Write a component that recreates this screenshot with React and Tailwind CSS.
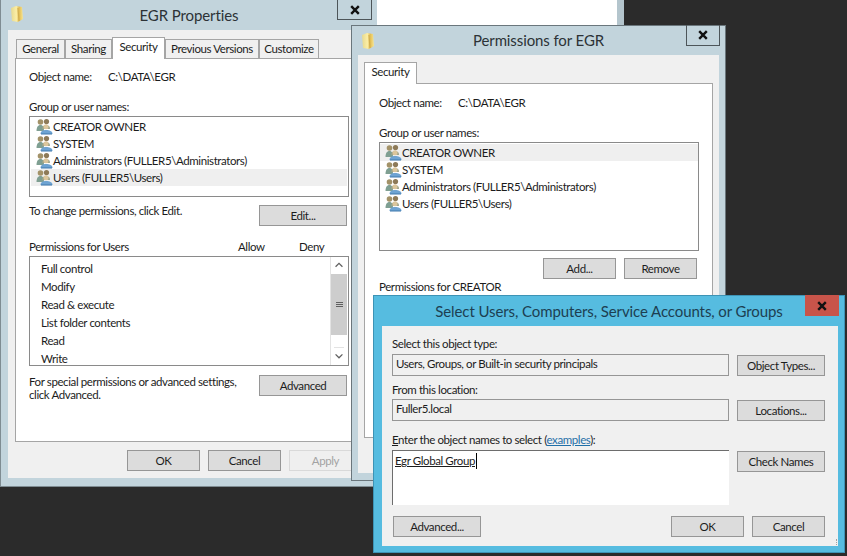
import React from 'react';

function FolderIcon() {
  return (
    <svg width="14" height="18" viewBox="0 0 14 18">
      <defs>
        <linearGradient id="fold" x1="0" y1="0" x2="1" y2="0">
          <stop offset="0" stopColor="#e6d98f" />
          <stop offset="0.45" stopColor="#fbeea6" />
          <stop offset="0.68" stopColor="#e3bd52" />
          <stop offset="1" stopColor="#f6e593" />
        </linearGradient>
      </defs>
      <path d="M1 3 L6 1 L12 2 L13 14 L8 17 L2 16 Z" fill="url(#fold)" />
      <path d="M8 3 L9 16" stroke="#d0ae50" strokeWidth="1.2" />
    </svg>
  );
}

function GroupIcon() {
  return (
    <svg width="17" height="17" viewBox="0 0 17 17" className="shrink-0">
      <path d="M0.5 13 C0.5 8.5 2.5 7 4.5 7 C6.5 7 8 8.5 8 13 Z" fill="#7f9f92" />
      <circle cx="4.5" cy="4" r="2.8" fill="#a39268" />
      <path d="M6 11 C6 8 8 7 10 7 C12.5 7 14 8 14 11 Z" fill="#9fa58a" />
      <circle cx="10.5" cy="3.6" r="2.6" fill="#8d7a58" />
      <circle cx="10" cy="8.8" r="2.5" fill="#dcc69c" />
      <path d="M4.5 16 C4.5 13 7 12 10 12 C13.5 12 16.5 13 16.5 16 Z" fill="#6ea3d2" />
      <path d="M5 16 H16" stroke="#3f78ad" strokeWidth="1" />
    </svg>
  );
}

function CloseGlyph() {
  return (
    <svg width="10" height="10" viewBox="0 0 10 10">
      <path d="M1.2 1.2 L8.8 8.8 M8.8 1.2 L1.2 8.8" stroke="#111" strokeWidth="2.4" />
    </svg>
  );
}

function Btn({ children, className = '', disabled }) {
  return (
    <div
      className={`flex items-center justify-center h-[21px] shrink-0 border text-center whitespace-nowrap ${
        disabled ? 'border-[#d9d9d9] bg-[#efefef] text-[#a3a3a3]' : 'border-[#969696] bg-[#dcdcdc] text-[#1c1c1c]'
      } ${className}`}
    >
      {children}
    </div>
  );
}

function Tab({ label, active, className = '' }) {
  return (
    <div
      className={`flex items-center justify-center border border-b-0 border-[#a5a5a5] whitespace-nowrap ${
        active ? 'h-[22px] bg-white relative z-10 -mb-[1px] pb-[3px]' : 'h-[19px] bg-[#f0f0f0]'
      } ${className}`}
    >
      {label}
    </div>
  );
}

function UserRows({ selected }) {
  const names = ['CREATOR OWNER', 'SYSTEM', 'Administrators (FULLER5\\Administrators)', 'Users (FULLER5\\Users)'];
  return names.map((name, i) => (
    <div key={name} className={`flex items-center h-[17px] pl-[5px] ${i === selected ? 'bg-[#efefef]' : ''}`}>
      <GroupIcon />
      <span>{name}</span>
    </div>
  ));
}

function ObjectName() {
  return (
    <div className="flex h-[16px] items-center">
      <span className="w-[79px]">Object name:</span>
      <span>C:\DATA\EGR</span>
    </div>
  );
}

function PropertiesWindow() {
  const perms = ['Full control', 'Modify', 'Read & execute', 'List folder contents', 'Read', 'Write'];
  return (
    <div className="absolute left-0 top-0 w-[377px] h-[487px] bg-[#c2d4dc] border-l border-b border-[#7f8c92] flex flex-col">
      <div className="h-[30px] shrink-0 flex items-center justify-center text-[15px] tracking-[-0.1px] text-[#2c3236] relative">
        <div className="absolute left-[9px] top-[5px]">
          <FolderIcon />
        </div>
        EGR Properties
        <div className="absolute right-[5px] top-0 w-[35px] h-[20px] border border-t-0 border-[#4d5559] flex items-center justify-center">
          <CloseGlyph />
        </div>
      </div>
      <div className="w-[361px] h-[448px] ml-[7px] bg-[#f0f0f0] px-[7px] pt-[7px]">
        <div className="flex items-end h-[21px] pl-[1px]">
          <Tab label="General" className="w-[49px]" />
          <Tab label="Sharing" className="w-[47px]" />
          <Tab label="Security" active className="w-[53px]" />
          <Tab label="Previous Versions" className="w-[94px]" />
          <Tab label="Customize" className="w-[60px]" />
        </div>
        <div className="h-[384px] bg-white border border-[#a5a5a5] px-[13px] pt-[10px]">
          <ObjectName />
          <div className="mt-[14px] h-[16px] leading-[16px]">Group or user names:</div>
          <div className="mt-[1px] w-[320px] h-[81px] border border-[#8a8a8a] p-[1px]">
            <UserRows selected={3} />
          </div>
          <div className="mt-[6px] w-[318px] flex justify-between items-start">
            <span className="leading-[16px]">To change permissions, click Edit.</span>
            <Btn className="w-[88px] mt-[2px]">Edit...</Btn>
          </div>
          <div className="mt-[13px] w-[320px] h-[16px] leading-[16px] flex">
            <span className="w-[209px]">Permissions for Users</span>
            <span className="w-[61px]">Allow</span>
            <span>Deny</span>
          </div>
          <div className="mt-[1px] w-[320px] h-[110px] border border-[#8a8a8a] flex overflow-hidden">
            <div className="flex-1 pl-[11px] pt-[3px] overflow-hidden">
              {perms.map((p) => (
                <div key={p} className="h-[18px] leading-[18px]">{p}</div>
              ))}
            </div>
            <div className="w-[17px] mr-[1px] border-l border-[#e3e3e3] flex flex-col items-center">
              <svg width="10" height="17" viewBox="0 0 10 17">
                <path d="M1.5 10 L5 6.5 L8.5 10" fill="none" stroke="#606060" strokeWidth="1.3" />
              </svg>
              <div className="w-full h-[62px] bg-[#cdcdcd] flex flex-col items-center justify-center gap-[1px]">
                <div className="w-[7px] h-[1px] bg-[#606060]" />
                <div className="w-[7px] h-[1px] bg-[#606060]" />
                <div className="w-[7px] h-[1px] bg-[#606060]" />
              </div>
              <div className="h-[13px]" />
              <svg width="10" height="17" viewBox="0 0 10 17" className="border-t border-[#e3e3e3] box-content">
                <path d="M1.5 6.5 L5 10 L8.5 6.5" fill="none" stroke="#606060" strokeWidth="1.3" />
              </svg>
            </div>
          </div>
          <div className="mt-[9px] w-[318px] flex justify-between items-start">
            <span className="leading-[13px] whitespace-nowrap">
              For special permissions or advanced settings,
              <br />
              click Advanced.
            </span>
            <Btn className="w-[88px]">Advanced</Btn>
          </div>
        </div>
        <div className="mt-[8px] flex gap-[8px] pl-[112px]">
          <Btn className="w-[73px]">OK</Btn>
          <Btn className="w-[73px]">Cancel</Btn>
          <Btn className="w-[73px]" disabled>Apply</Btn>
        </div>
      </div>
    </div>
  );
}

function PermissionsWindow() {
  return (
    <div className="absolute left-[351px] top-[25px] w-[375px] h-[456px] bg-[#c2d4dc] border border-[#6a767c] flex flex-col">
      <div className="h-[29px] shrink-0 flex items-center justify-center text-[15px] tracking-[-0.1px] text-[#2c3236] relative">
        <div className="absolute left-[9px] top-[6px]">
          <FolderIcon />
        </div>
        Permissions for EGR
        <div className="absolute right-[5px] top-[-1px] w-[34px] h-[21px] border border-t-0 border-[#4d5559] flex items-center justify-center">
          <CloseGlyph />
        </div>
      </div>
      <div className="mx-[6px] h-[418px] bg-[#f0f0f0] px-[6px] pt-[8px]">
        <div className="flex items-end h-[20px]">
          <Tab label="Security" active className="w-[53px]" />
        </div>
        <div className="h-[355px] bg-white border border-[#a5a5a5] px-[14px] pt-[11px]">
          <ObjectName />
          <div className="mt-[14px] h-[16px] leading-[16px]">Group or user names:</div>
          <div className="mt-[1px] w-[320px] h-[109px] border border-[#8a8a8a] pt-[1px]">
            <UserRows selected={0} />
          </div>
          <div className="mt-[7px] w-[318px] flex justify-end gap-[8px]">
            <Btn className="w-[73px]">Add...</Btn>
            <Btn className="w-[73px]">Remove</Btn>
          </div>
          <div className="h-[16px] leading-[16px]">Permissions for CREATOR</div>
        </div>
      </div>
    </div>
  );
}

function SelectWindow() {
  return (
    <div className="absolute left-[373px] top-[295px] w-[472px] h-[258px] bg-[#56bce0] border border-[#3d93b5] flex flex-col">
      <div className="h-[30px] shrink-0 flex items-center justify-center text-[15px] tracking-[-0.1px] text-[#1d3f52] relative">
        Select Users, Computers, Service Accounts, or Groups
        <div className="absolute right-[5px] top-[-1px] w-[34px] h-[21px] bg-[#c8544a] flex items-center justify-center">
          <CloseGlyph />
        </div>
      </div>
      <div className="ml-[8px] mr-[6px] h-[220px] bg-[#f0f0f0] pl-[10px] pt-[10px] relative">
        <div className="h-[16px] leading-[16px]">Select this object type:</div>
        <div className="mt-[2px] flex items-start gap-[8px]">
          <div className="w-[337px] h-[22px] border border-[#969696] pl-[3px] leading-[18px]">Users, Groups, or Built-in security principals</div>
          <Btn className="w-[88px] mt-[1px]">Object Types...</Btn>
        </div>
        <div className="mt-[6px] h-[16px] leading-[16px]">From this location:</div>
        <div className="mt-[1px] flex items-start gap-[8px]">
          <div className="w-[337px] h-[22px] border border-[#969696] pl-[3px] leading-[18px]">Fuller5.local</div>
          <Btn className="w-[88px] mt-[1px]">Locations...</Btn>
        </div>
        <div className="mt-[11px] h-[16px] leading-[16px]">
          <u>E</u>nter the object names to select (<u className="text-[#1f6fa8]">examples</u>):
        </div>
        <div className="mt-[2px] flex items-start gap-[8px]">
          <div className="w-[337px] h-[55px] bg-white border-t border-l border-[#6d6d6d] pl-[2px] pt-[1px]">
            <span className="inline-block leading-[16px] underline border-r border-black pr-[1px]">Egr Global Group</span>
          </div>
          <Btn className="w-[88px] mt-[1px]">Check Names</Btn>
        </div>
        <div className="mt-[11px] pl-[1px] flex w-[433px] justify-between">
          <Btn className="w-[88px]">Advanced...</Btn>
          <div className="flex gap-[8px]">
            <Btn className="w-[73px]">OK</Btn>
            <Btn className="w-[73px]">Cancel</Btn>
          </div>
        </div>
        <div className="absolute right-[1px] bottom-[1px] w-[5px] h-[6px] border-r border-dotted border-[#a0a0a0]" />
      </div>
    </div>
  );
}

export default function App() {
  return (
    <div className="relative w-[847px] h-[556px] overflow-hidden bg-[#2b2b2b] font-['Lato',sans-serif] text-[11.5px] tracking-[-0.4px] text-[#1c1c1c]">
      {/* window behind the others, only its lower edge shows */}
      <div className="absolute left-[377px] top-0 w-[247px] h-[26px] bg-white border-r-[7px] border-[#b4c5cd]" />
      <PropertiesWindow />
      <PermissionsWindow />
      <SelectWindow />
    </div>
  );
}
